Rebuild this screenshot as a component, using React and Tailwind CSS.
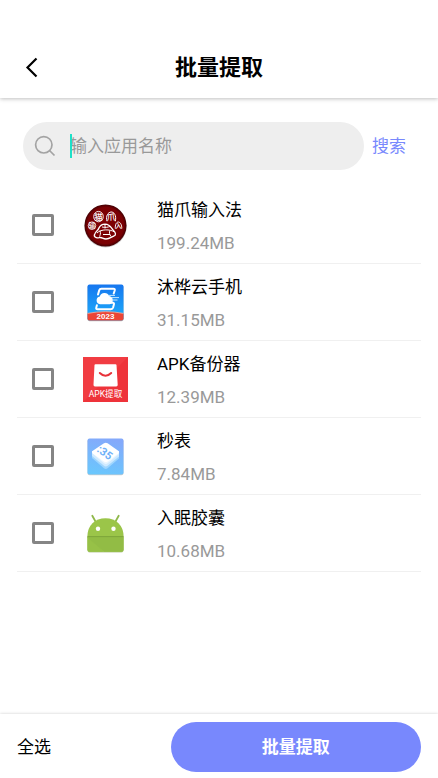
import React, { useState } from 'react';

const PawIcon = () => (
    <svg viewBox="0 0 45 45" className="w-[45px] h-[45px]" aria-hidden="true">
        <defs>
            <radialGradient id="paw-bg">
                <stop offset="0" stopColor="#7f0204" />
                <stop offset="0.86" stopColor="#7a0003" />
                <stop offset="1" stopColor="#420003" />
            </radialGradient>
        </defs>
        <circle cx="22.5" cy="23.2" r="21.2" fill="#000" opacity="0.2" />
        <circle cx="22.5" cy="22.5" r="21" fill="url(#paw-bg)" />
        <g fill="#fff" fontFamily="'Noto Sans CJK SC', sans-serif" fontWeight="500" textAnchor="middle">
            <text x="15.5" y="16.800" fontSize="8.500">猫</text>
            <text x="28" y="16.800" fontSize="8.500">爪</text>
            <text x="9" y="25" fontSize="6.500">输</text>
            <text x="35.5" y="25" fontSize="6.500">入</text>
        </g>
        <g fill="none" stroke="#fff">
            <ellipse cx="15.5" cy="13.6" rx="4.8" ry="5.2" strokeWidth="0.9" />
            <path d="M24 18.300C22.500 13 25 9.300 28 9s5.700 3.500 4.300 9.300" strokeWidth="1" />
            <circle cx="9" cy="22.700" r="3.800" strokeWidth="0.8" />
            <path d="M32.300 25.500c-.2-3.500 1-6.500 3-6.500s3.600 3 3.500 6.500" strokeWidth="0.9" />
            <path d="M12 30.500c-2 3 1 5 4 4.200 3-1 3.500 1.300 7 1.300s6-2.500 8-3c2.500-.8 1.500-3.800-.5-5.500-2.500-2-2.500-6-8.500-6.300-6 0-5.500 4-7.500 6-1 1-1.800 2-2.500 3.300z" strokeWidth="1.3" />
            <path d="M14 30c4-4 13-4 17.500-1M17 27.500c1 3 0 5-.5 6M19 24c4 1 6 0 8-.5M22 21.500v4M20 31.500h7M27 27.500c-1 2-.5 4 1 6" strokeWidth="1" />
        </g>
    </svg>
);

const CloudPhoneIcon = () => (
    <svg viewBox="0 0 45 45" className="w-[45px] h-[45px]" aria-hidden="true">
        <defs>
            <linearGradient id="cloud-bg" x1="0" y1="0" x2="0" y2="1">
                <stop offset="0" stopColor="#1676ef" />
                <stop offset="1" stopColor="#1fb0fb" />
            </linearGradient>
            <clipPath id="cloud-clip">
                <rect x="4.500" y="4.500" width="36" height="36" rx="2" />
            </clipPath>
        </defs>
        <rect x="4.500" y="5.200" width="36" height="36" rx="2" fill="#000" opacity="0.25" />
        <g clipPath="url(#cloud-clip)">
            <rect x="4" y="4" width="37" height="37" fill="url(#cloud-bg)" />
            <path d="M4 33.500Q22.500 29.800 41 33.500V41H4z" fill="#ec4535" />
            <path d="M4 33.500Q22.500 29.800 41 33.500" fill="none" stroke="#ffb199" strokeWidth="0.8" />
        </g>
        <g fill="none" stroke="#fff" strokeWidth="2" strokeLinejoin="round" strokeLinecap="round">
            <path d="M15 14.500l1.200-4.100Q16.700 8.800 18.400 8.800h12q1.800 0 1.300 1.700l-1 3" />
            <path d="M27 22.700h3q1.300.3.900 1.800l-.8 3q-.5 1.700-2.300 1.700H14.600q-1.800 0-1.300-1.700l.6-2.200" />
        </g>
        <path d="M17 24.300a3.900 3.900 0 0 1-.2-7.700 4.900 4.900 0 0 1 9.300-.5 4.200 4.200 0 0 1 .6 8.200z" fill="#fff" />
        <path d="M28 17.600h8M28.500 20h6M25 15.400h7" stroke="#d9f1ff" strokeWidth="0.9" />
        <text x="22.500" y="39.200" fontSize="8" fontWeight="700" fill="#fff" textAnchor="middle" fontFamily="'Liberation Sans', sans-serif">2023</text>
    </svg>
);

const ApkIcon = () => (
    <svg viewBox="0 0 45 45" className="w-[45px] h-[45px]" aria-hidden="true">
        <rect width="45" height="45" fill="#ee333a" />
        <path d="M0 0h45L0 45z" fill="#f3454a" opacity="0.5" />
        <path d="M12.500 7.200h20q.9 0 1 .9l1.200 19.700q.1 1.700-1.500 1.700H12q-1.600 0-1.500-1.700L11.500 8.100q.1-.9 1-.9z" fill="#fff" />
        <path d="M16.800 16q5.700 5.600 11.400 0" fill="none" stroke="#e8323a" strokeWidth="2" strokeLinecap="round" />
        <text x="22.500" y="39.800" fontSize="8.600" fill="#fff" textAnchor="middle" fontFamily="Roboto, 'Noto Sans CJK SC', sans-serif">APK提取</text>
    </svg>
);

const StopwatchIcon = () => (
    <svg viewBox="0 0 45 45" className="w-[45px] h-[45px]" aria-hidden="true">
        <defs>
            <linearGradient id="watch-bg" x1="0.5" y1="0" x2="0.3" y2="1">
                <stop offset="0" stopColor="#84a9fb" />
                <stop offset="1" stopColor="#6ac7fd" />
            </linearGradient>
        </defs>
        <rect x="4.500" y="5.200" width="36" height="36" rx="2" fill="#000" opacity="0.2" />
        <rect x="4.500" y="4.500" width="36" height="36" rx="2" fill="url(#watch-bg)" />
        <path d="M9 24l12 10.300q1.800 1.300 3.600 0L36 24.500V20H9z" fill="#9fd6fe" />
        <path d="M9 22l12 9.800q1.800 1.300 3.600 0L36 22.500V19H9z" fill="#cfeaff" />
        <path d="M9 19l12 10.300q1.800 1.300 3.600 0L36 20V17H9z" fill="#eaf6ff" />
        <path d="M9.800 16.800L21 9.200q1.800-1.100 3.600 0l10.600 7.500q1.800 1.400 0 2.800l-10.600 8q-1.800 1.200-3.600 0L9.800 19.500q-1.800-1.400 0-2.700z" fill="#fff" />
        <text transform="translate(22 18.500) rotate(36)" y="4" fontSize="11" fontWeight="700" fill="#6fb0f8" textAnchor="middle" fontFamily="Roboto, sans-serif">:35</text>
    </svg>
);

const AndroidIcon = () => (
    <svg viewBox="0 0 45 45" className="w-[45px] h-[45px]" aria-hidden="true">
        <path d="M12.500 10.500L9.300 4.800M32.500 10.500l3.200-5.700" stroke="#8fb84a" strokeWidth="1.800" strokeLinecap="round" />
        <path d="M4.500 26C4.500 15 12 8 22.500 8s18 7 18 18v13.500q0 2-2 2h-32q-2 0-2-2z" fill="#7c9a45" opacity="0.5" />
        <path d="M4.500 25.200C4.500 14.500 12 7.300 22.500 7.300s18 7.200 18 17.900V38.800q0 2-2 2h-32q-2 0-2-2z" fill="#9bc549" />
        <path d="M4.500 26l16 14.800H6.500q-2 0-2-2z" fill="#97c147" />
        <path d="M4.500 26h36v12.800q0 2-2 2H21L4.500 26.500z" fill="#92bc45" />
        <path d="M4.500 25.600h36" stroke="#7ba239" strokeWidth="0.900" />
        <circle cx="15" cy="17.800" r="2.200" fill="#fff" />
        <circle cx="30.500" cy="17.800" r="2.200" fill="#fff" />
    </svg>
);

const APPS = [
    { id: 'paw', name: '猫爪输入法', size: '199.24MB', Icon: PawIcon },
    { id: 'cloud', name: '沐桦云手机', size: '31.15MB', Icon: CloudPhoneIcon },
    { id: 'apk', name: 'APK备份器', size: '12.39MB', Icon: ApkIcon },
    { id: 'watch', name: '秒表', size: '7.84MB', Icon: StopwatchIcon },
    { id: 'sleep', name: '入眠胶囊', size: '10.68MB', Icon: AndroidIcon },
];

const AppRow = ({ app, checked, onToggle }) => {
    const { id, name, size, Icon } = app;

    return (
        <li className="border-b border-[#f0f0f0]">
            <label htmlFor={`app-${id}`} className="flex items-center h-[76px] pl-[15px]">
                <input
                    id={`app-${id}`}
                    type="checkbox"
                    checked={checked}
                    onChange={onToggle}
                    className="appearance-none shrink-0 w-[22px] h-[22px] rounded-[2px] border-[3px] border-[#858585] checked:bg-[#7888fd] checked:border-[#7888fd]"
                />
                <span className="ml-[29px] shrink-0">
                    <Icon />
                </span>
                <span className="ml-[29px] pt-1 flex flex-col text-[17px] leading-[33px]">
                    <span className="text-black">{name}</span>
                    <span className="text-[#999999]">{size}</span>
                </span>
            </label>
        </li>
    );
};

const App = () => {
    const [query, setQuery] = useState('');
    const [selected, setSelected] = useState([]);

    const toggle = (id) => {
        setSelected((prev) => (prev.includes(id) ? prev.filter((x) => x !== id) : [...prev, id]));
    };

    const toggleAll = () => {
        setSelected(selected.length === APPS.length ? [] : APPS.map((a) => a.id));
    };

    const visible = APPS.filter((a) => a.name.includes(query));

    return (
        <div className="min-h-screen flex flex-col bg-white font-[Roboto,'Noto_Sans_CJK_SC',sans-serif]">
            <header className="grid grid-cols-[1fr_auto_1fr] items-center pt-[37px] h-[98px] px-4 shadow-[0_1px_4px_rgba(0,0,0,0.25)]">
                <button aria-label="返回" className="w-8 h-8 flex items-center justify-center">
                    <svg viewBox="0 0 32 32" className="w-8 h-8" fill="none" stroke="#000" strokeWidth="2.200">
                        <path d="M20.500 6.500L11.500 15.500l9 9" />
                    </svg>
                </button>
                <h1 className="text-[22px] leading-8 font-bold text-black">批量提取</h1>
            </header>

            <main className="flex-1 px-[17px] pt-6">
                <form onSubmit={(e) => e.preventDefault()} className="flex items-center pl-[6px] pr-[15px]">
                    <div className="flex-1 min-w-0 flex items-center h-12 rounded-full bg-[#eeeeee] pl-[11px] pr-4">
                        <svg viewBox="0 0 22 22" className="w-[22px] h-[22px] shrink-0" fill="none" stroke="#a3a3a3" strokeWidth="1.700" aria-hidden="true">
                            <circle cx="9.800" cy="9.800" r="8.200" />
                            <path d="M15.500 15.500l5 5" />
                        </svg>
                        <div className="relative flex-1 min-w-0 ml-[14px]">
                            {!query && <span className="absolute left-0 top-0 w-[2px] h-6 bg-[#1de0c8]"></span>}
                            <input
                                type="text"
                                aria-label="输入应用名称"
                                placeholder="输入应用名称"
                                value={query}
                                onChange={(e) => setQuery(e.target.value)}
                                className="block w-full h-6 bg-transparent outline-none text-[17px] leading-6 text-black placeholder:text-[#999999]"
                            />
                        </div>
                    </div>
                    <button type="submit" className="ml-2 shrink-0 text-[17px] leading-6 text-[#7888fd]">搜索</button>
                </form>

                <ul className="mt-[17px]">
                    {visible.map((app) => (
                        <AppRow key={app.id} app={app} checked={selected.includes(app.id)} onToggle={() => toggle(app.id)} />
                    ))}
                </ul>
            </main>

            <footer className="flex items-center justify-between px-[17px] pt-2 pb-[6px] shadow-[0_0_3px_rgba(0,0,0,0.2)]">
                <button onClick={toggleAll} className="text-[17px] leading-6 text-black">全选</button>
                <button className="w-[62%] h-[50px] rounded-full bg-[#7888fd] text-[17px] leading-6 font-bold text-white">批量提取</button>
            </footer>
        </div>
    );
};

export default App;
